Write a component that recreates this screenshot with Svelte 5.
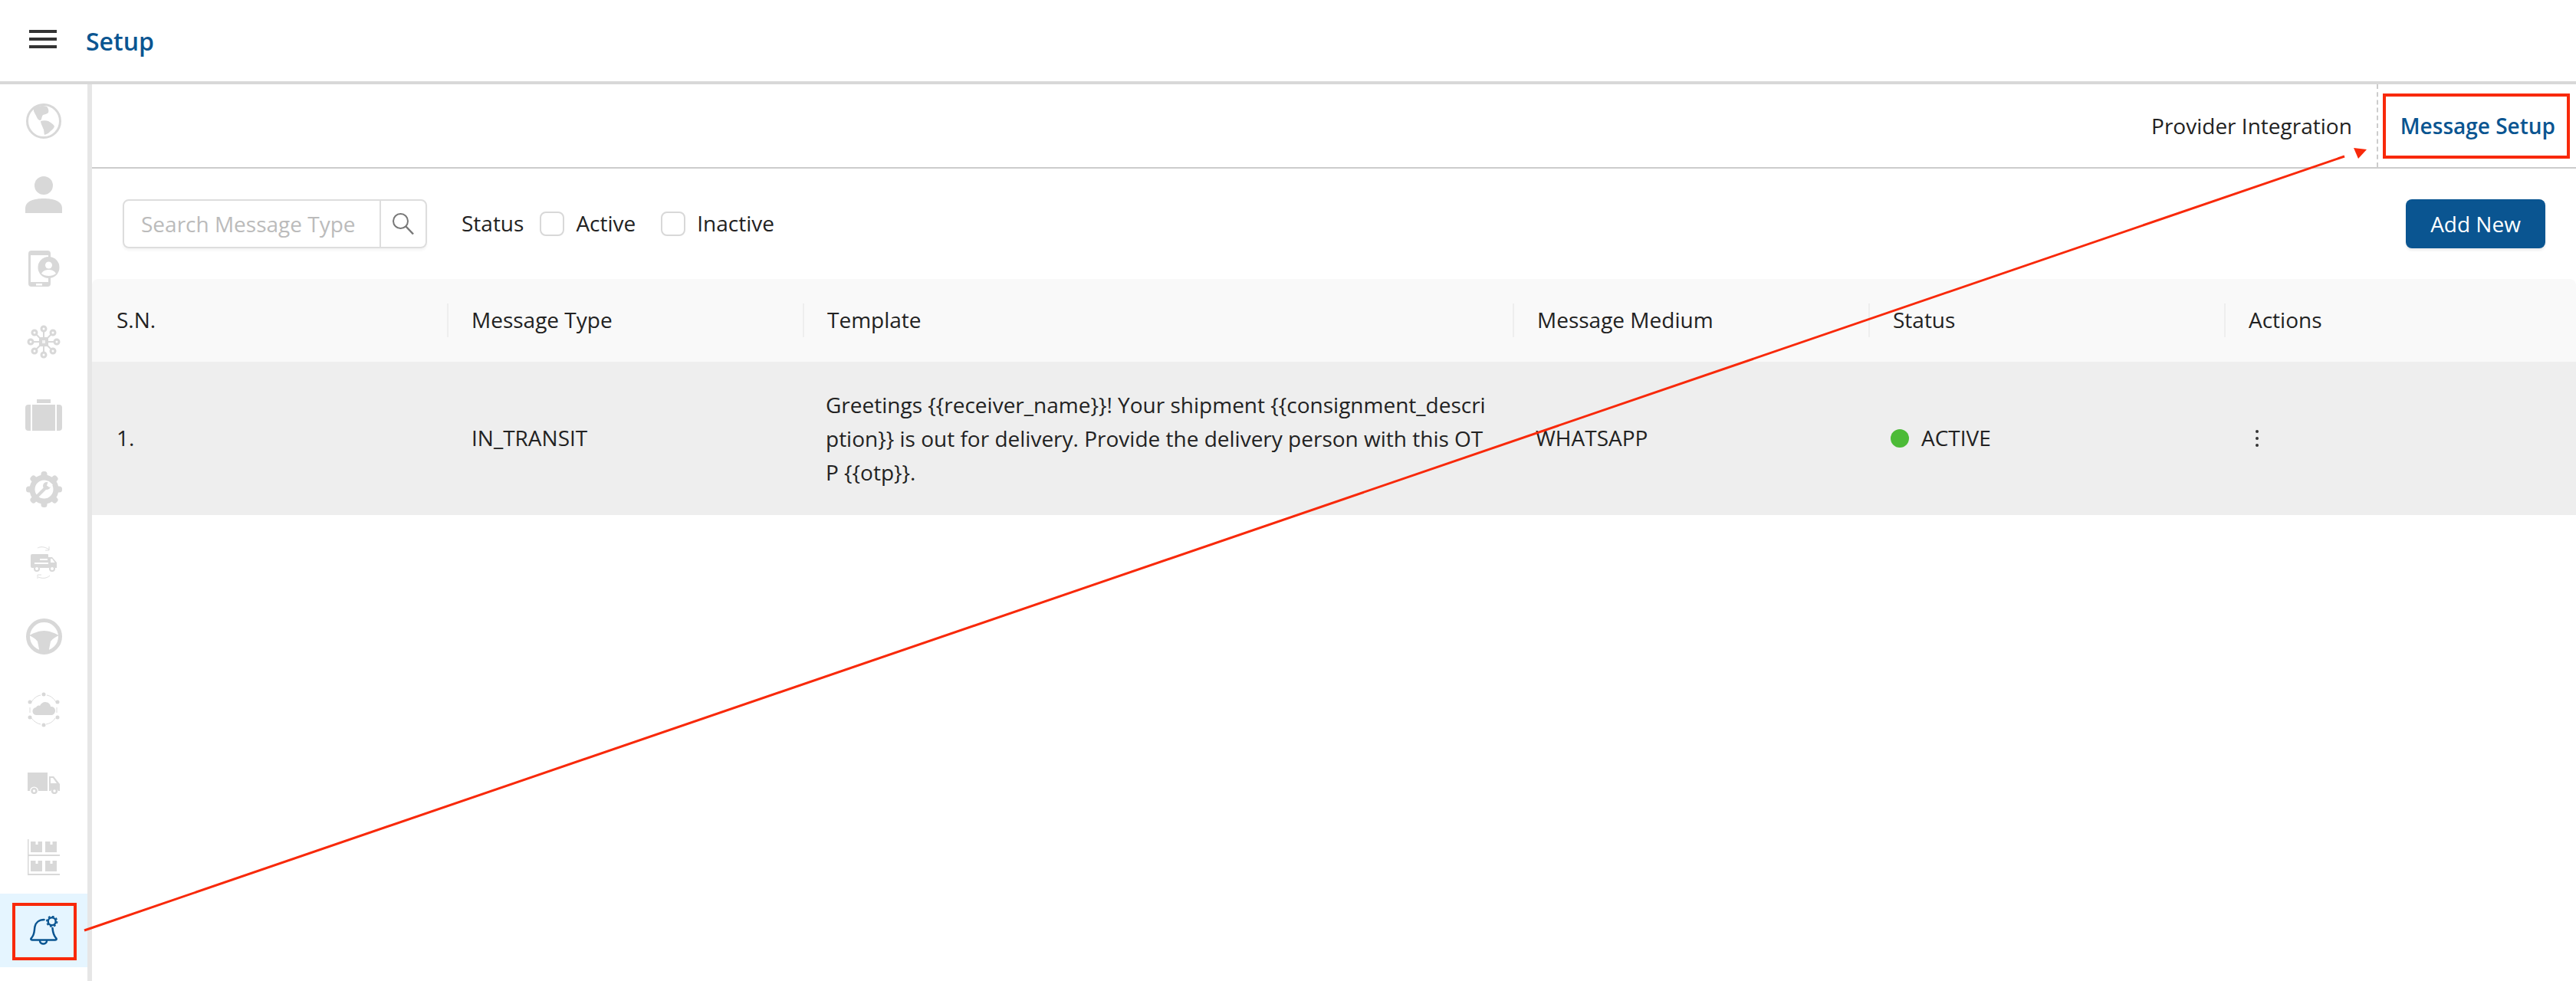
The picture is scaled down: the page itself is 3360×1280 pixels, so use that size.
<script>
  const columns = ['S.N.', 'Message Type', 'Template', 'Message Medium', 'Status', 'Actions'];
  const template = 'Greetings {{receiver_name}}! Your shipment {{consignment_description}} is out for delivery. Provide the delivery person with this OTP {{otp}}.';
  const hubAngles = [0, 45, 90, 135, 180, 225, 270, 315];
  const gearAngles = [0, 45, 90, 135, 180, 225, 270, 315];
</script>

<div class="page">
  <header class="topbar">
    <button class="burger" aria-label="Menu"><span></span><span></span><span></span></button>
    <h1>Setup</h1>
  </header>

  <div class="body">
    <aside class="sidebar">
      <div class="item">
        <svg width="46" height="46" viewBox="0 0 46 46"><circle cx="23" cy="23" r="21.500" fill="none" stroke="#d8d8d8" stroke-width="3"/><path fill="#d8d8d8" d="M10 6c5-3 12-4 17-2 2 2 3 5 2 8-2 2-5 2-7 3-2 2-1 5-3 7-3 0-4-2-5-4-1-3-3-5-4-8zM19 23c3-1 7-1 10 0 3 2 7 4 8 7-1 3-3 4-5 6-2 2-4 4-8 5-1-3 0-6-2-9-1-3-3-6-3-9z"/></svg>
      </div>
      <div class="item">
        <svg width="48" height="48" viewBox="0 0 48 48"><circle cx="24" cy="12" r="12" fill="#d8d8d8"/><path fill="#d8d8d8" d="M0 48v-6c0-10 12-13 24-13s24 3 24 13v6z"/></svg>
      </div>
      <div class="item">
        <svg width="41" height="47" viewBox="0 0 41 47"><rect width="29" height="47" rx="4" fill="#d8d8d8"/><rect x="3" y="6" width="23" height="35" fill="#fff"/><rect x="10" y="43" width="8" height="2.500" fill="#fff"/><circle cx="26.500" cy="22" r="14" fill="#d8d8d8"/><circle cx="26.500" cy="19" r="4.500" fill="#fff"/><path fill="#fff" d="M17 30c2-4 6-5 9.500-5s7.500 1 9.500 5c-5 4-14 4-19 0z"/></svg>
      </div>
      <div class="item">
        <svg width="44" height="44" viewBox="0 0 44 44">
          {#each hubAngles as a}
            <g transform="rotate({a} 22 22)">
              <rect x="21" y="6" width="2" height="10" fill="#d8d8d8"/>
              <circle cx="22" cy="5" r="3" fill="#fff" stroke="#d8d8d8" stroke-width="3"/>
            </g>
          {/each}
          <rect x="16" y="16" width="12" height="12" rx="1.500" fill="#d8d8d8"/>
          <rect x="20" y="20" width="4" height="4" fill="#f4f4f4"/>
        </svg>
      </div>
      <div class="item">
        <svg width="48" height="42" viewBox="0 0 48 42"><path fill="#d8d8d8" d="M15 0h18v5H15zM4 7h3v34H4a4 4 0 0 1-4-4V11a4 4 0 0 1 4-4zM9 7h30v34H9zM41 7h3a4 4 0 0 1 4 4v26a4 4 0 0 1-4 4h-3z"/></svg>
      </div>
      <div class="item">
        <svg width="47" height="47" viewBox="0 0 47 47">
          <circle cx="23.500" cy="23.500" r="15.500" fill="none" stroke="#d8d8d8" stroke-width="7"/>
          {#each gearAngles as a}
            <rect x="19.500" y="0" width="8" height="10" rx="3.500" fill="#d8d8d8" transform="rotate({a} 23.500 23.500)"/>
          {/each}
          <path stroke="#d8d8d8" stroke-width="4" stroke-linecap="round" d="M15 32 25 22"/>
          <circle cx="27" cy="19" r="5" fill="#d8d8d8"/>
          <path fill="#fff" d="M27 18.500l2-6 6 5-4.500 3.500z"/>
        </svg>
      </div>
      <div class="item">
        <svg width="34" height="44" viewBox="0 0 34 44"><g fill="none" stroke="#dedede" stroke-width="1"><path d="M9 3c4-2 9-2 15 2M24 1v5h-5M10 41c5 2 11 2 15-2M9 43v-5h5"/></g><path fill="#d8d8d8" d="M2 11h20a1 1 0 0 1 1 1v3h5l6 7v7h-2a4.500 4.500 0 0 0-8 0H12a4.500 4.500 0 0 0-8 0H2a2 2 0 0 1-2-2V13a2 2 0 0 1 2-2z"/><circle cx="8" cy="30" r="3" fill="#fff" stroke="#d8d8d8" stroke-width="2"/><circle cx="28" cy="30" r="3" fill="#fff" stroke="#d8d8d8" stroke-width="2"/><path stroke="#fff" stroke-width="2" d="M12 18h10M5 23h18"/><path fill="#fff" d="M26 17h2l3.500 5H26z"/></svg>
      </div>
      <div class="item">
        <svg width="47" height="47" viewBox="0 0 47 47"><circle cx="23.500" cy="23.500" r="21" fill="none" stroke="#d8d8d8" stroke-width="5"/><path fill="#d8d8d8" d="M4 22c6-3 13-6 19.500-6S37 19 43 22c-4 2-8 4-11 8l-3 15h-11l-3-15c-3-4-7-6-11-8z"/></svg>
      </div>
      <div class="item">
        <svg width="42" height="46" viewBox="0 0 42 46"><g fill="none" stroke="#dcdcdc" stroke-width="1"><path d="M25 4c5 1 9 4 12 9M38 20v7M36 34c-3 5-7 7-12 8M17 42c-5-1-9-4-12-8M3 27v-7M5 13c3-5 7-8 12-9"/></g><g fill="#d8d8d8"><circle cx="21" cy="3" r="2.500"/><circle cx="39" cy="13" r="2.500"/><circle cx="39" cy="33" r="2.500"/><circle cx="21" cy="43" r="2.500"/><circle cx="3" cy="33" r="2.500"/><circle cx="3" cy="13" r="2.500"/><path d="M12 30a5 5 0 0 1-1-10c1-2 3-3 5-2 1-3 4-5 7-5 4 0 7 3 7 6 4 0 6 2 6 5.500S33 30 31 30z"/></g></svg>
      </div>
      <div class="item">
        <svg width="42" height="28" viewBox="0 0 42 28"><path fill="#d8d8d8" d="M0 0h26v24H14a5.500 5.500 0 0 0-11 0H0zM28 5h6l8 10v9h-2a5.500 5.500 0 0 0-10 0h-2z"/><circle cx="8.500" cy="24" r="3" fill="#fff" stroke="#d8d8d8" stroke-width="2.500"/><circle cx="35" cy="24" r="3" fill="#fff" stroke="#d8d8d8" stroke-width="2.500"/><path fill="#fff" d="M30 7h3l5 7h-8z"/></svg>
      </div>
      <div class="item">
        <svg width="42" height="47" viewBox="0 0 42 47"><path fill="#d8d8d8" d="M0 0h1.500v20H42v2H1.500v23H42v2H0z"/><path fill="#d8d8d8" d="M4 3h15v14H4zM23 3h15v14H23zM4 28h15v14H4zM23 28h15v14H23z"/><path fill="#fff" d="M10.500 3h3v4h-3zM29.500 3h3v4h-3zM10.500 28h3v4h-3zM29.500 28h3v4h-3z"/></svg>
      </div>
      <div class="item active">
        <svg width="37" height="39" viewBox="13 10 37 39"><g fill="none" stroke="#0a5591" stroke-linecap="round" stroke-linejoin="round"><path stroke-width="2.500" d="M31.500 15c-7 0-11 4-12 9-1 5 0 10-4.500 15-1 1-1 2.500 1 2.500h30c2 0 2-1.500 1-2.500-4-5-4-8-4.500-13"/><path stroke-width="2.500" d="M26 42.500c0 2.500 2.500 4 4.500 4s4.500-1.500 4.500-4"/><circle cx="41.700" cy="17.300" r="5" stroke-width="2.500"/></g><circle cx="41.700" cy="17.300" r="6.800" fill="none" stroke="#0a5591" stroke-width="1.800" stroke-dasharray="2.700 2.640"/></svg>
        <span class="callout left"></span>
      </div>
    </aside>

    <main class="content">
      <nav class="tabs">
        <span class="tab">Provider Integration</span>
        <span class="tab current">Message Setup<span class="callout right"></span></span>
      </nav>

      <div class="toolbar">
        <div class="search">
          <input placeholder="Search Message Type" aria-label="Search Message Type" />
          <span class="search-btn">
            <svg width="30" height="30" viewBox="0 0 30 30"><circle cx="11.500" cy="11.500" r="9.500" fill="none" stroke="#777" stroke-width="2"/><path stroke="#777" stroke-width="2.500" d="M18.500 18.500 28 28.500"/></svg>
          </span>
        </div>
        <span class="filter-label">Status</span>
        <label class="check"><span class="box"></span><span class="lbl">Active</span></label>
        <label class="check"><span class="box"></span><span class="lbl">Inactive</span></label>
        <button class="add">Add New</button>
      </div>

      <div class="table">
        <div class="row head">
          {#each columns as c}
            <div class="cell"><span class="hd">{c}</span></div>
          {/each}
        </div>
        <div class="row data">
          <div class="cell">1.</div>
          <div class="cell">IN_TRANSIT</div>
          <div class="cell tpl">{template}</div>
          <div class="cell">WHATSAPP</div>
          <div class="cell status"><span class="dot"></span>ACTIVE</div>
          <div class="cell kebab"><i></i><i></i><i></i></div>
        </div>
      </div>
    </main>
  </div>

  <svg class="arrow" width="3360" height="1280" viewBox="0 0 3360 1280">
    <line x1="110" y1="1214" x2="3058" y2="204" stroke="#f8290a" stroke-width="3"/>
    <polygon points="3070,193 3087,195 3076,207" fill="#f8290a"/>
  </svg>
</div>

<style>
  :global(body) { margin: 0; background: #fff; }
  .page {
    position: relative;
    width: 3360px;
    height: 1280px;
    overflow: hidden;
    font-family: "Open Sans", "Liberation Sans", sans-serif;
    font-size: 28px;
    color: #222;
    display: flex;
    flex-direction: column;
  }
  .topbar {
    height: 106px;
    flex: none;
    border-bottom: 4px solid #d8d8d8;
    display: flex;
    align-items: center;
    padding-left: 38px;
    gap: 38px;
  }
  .burger {
    width: 36px;
    height: 24px;
    padding: 0;
    border: 0;
    background: none;
    display: flex;
    flex-direction: column;
    justify-content: space-between;
    margin-top: -5px;
  }
  .burger span { display: block; height: 4px; background: #333; }
  h1 {
    margin: 0;
    font-size: 32px;
    font-weight: 600;
    color: #0a5591;
  }
  .body { display: flex; flex: 1; min-height: 0; }
  .sidebar {
    width: 114px;
    flex: none;
    border-right: 6px solid #e6e6e6;
    display: flex;
    flex-direction: column;
  }
  .item {
    height: 96px;
    flex: none;
    display: flex;
    align-items: center;
    justify-content: center;
    position: relative;
  }
  .item.active { background: #e5f5ff; }
  .callout { position: absolute; border: 4px solid #f8290a; box-sizing: border-box; pointer-events: none; }
  .callout.left { left: 16px; top: 12px; width: 84px; height: 75px; }
  .callout.right { left: 6px; top: 12px; width: 244px; height: 85px; }
  .content { flex: 1; min-width: 0; display: flex; flex-direction: column; }
  .tabs {
    height: 108px;
    flex: none;
    border-bottom: 2px solid #ccc;
    display: flex;
    justify-content: flex-end;
  }
  .tab { display: flex; align-items: center; position: relative; }
  .tab:first-child { padding-right: 32px; border-right: 2px dashed #ccc; }
  .tab.current { color: #0a5591; font-weight: 600; padding: 0 27px 0 29px; }
  .toolbar {
    height: 144px;
    flex: none;
    display: flex;
    align-items: center;
    padding: 0 40px;
    box-sizing: border-box;
  }
  .search {
    width: 397px;
    height: 64px;
    box-sizing: border-box;
    border: 2px solid #ddd;
    border-radius: 8px;
    display: flex;
    box-shadow: 0 3px 3px #f6f6f6;
    margin-right: 45px;
  }
  .search input {
    flex: 1;
    min-width: 0;
    border: 0;
    outline: 0;
    background: none;
    padding: 0 0 0 22px;
    font: inherit;
  }
  .search input::placeholder { color: #bbb; opacity: 1; }
  .search-btn {
    width: 58px;
    flex: none;
    border-left: 2px solid #ddd;
    display: flex;
    align-items: center;
    justify-content: center;
  }
  .filter-label { margin-right: 21px; padding-bottom: 3px; }
  .check { display: flex; align-items: center; margin-right: 33px; }
  .lbl { padding-bottom: 3px; }
  .box {
    width: 32px;
    height: 32px;
    box-sizing: border-box;
    border: 2px solid #d8d8d8;
    border-radius: 8px;
    margin-right: 15px;
    background: #fff;
  }
  .add {
    margin-left: auto;
    width: 182px;
    height: 64px;
    border: 0;
    border-radius: 8px;
    background: #0a5591;
    color: #fff;
    font: inherit;
    box-shadow: 0 3px 3px #eee;
  }
  .row {
    display: grid;
    grid-template-columns: 463px 464px 926px 464px 464px 1fr;
  }
  .head { height: 108px; background: #f9f9f9; align-items: center; border-radius: 8px 8px 0 0; }
  .head .cell { height: 44px; display: flex; align-items: center; padding-left: 30px; border-left: 2px solid #eee; }
  .head .cell:first-child { border-left: 0; padding-left: 32px; }
  .hd { padding-bottom: 2px; }
  .data { height: 200px; background: #eee; align-items: center; }
  .data .cell { padding-left: 32px; padding-bottom: 2px; }
  .data .cell:nth-child(3), .data .cell:nth-child(4) { padding-left: 30px; }
  .data .tpl { line-height: 44px; word-break: break-all; padding-right: 32px; padding-bottom: 0; }
  .status { display: flex; align-items: center; }
  .dot { width: 24px; height: 24px; border-radius: 50%; background: #4cbb37; margin: 2px 16px 0 -3px; }
  .kebab { display: flex; flex-direction: column; gap: 5px; }
  .data .kebab { padding-left: 41px; padding-bottom: 0; }
  .kebab i { width: 4px; height: 4px; border-radius: 50%; background: #333; }
  .arrow { position: absolute; left: 0; top: 0; pointer-events: none; }
</style>
